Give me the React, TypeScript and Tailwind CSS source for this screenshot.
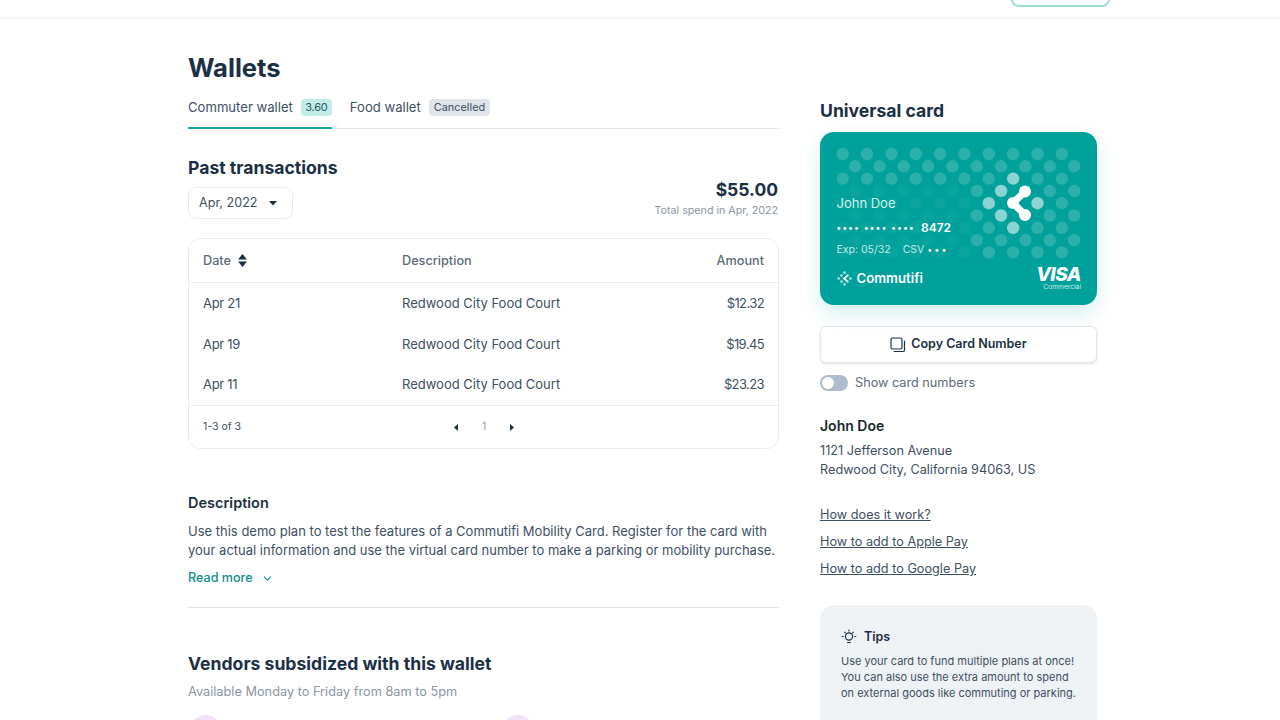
import { ChevronDown } from 'lucide-react'

const rows = [
  { date: 'Apr 21', amount: '$12.32' },
  { date: 'Apr 19', amount: '$19.45' },
  { date: 'Apr 11', amount: '$23.23' },
]

function dotOpacity(r: number, c: number, x: number) {
  // the strong dots around the logo
  const strong = (r === 2 && c === 7) || (r === 4 && (c === 6 || c === 8)) || (r === 6 && c === 7) || ((r === 3 || r === 5) && c === 6)
  if (strong) return 0.55
  if ((r === 3 || r === 5) && c === 7) return 0
  if (r === 4 && c === 7) return 0
  if (r < 3) return 0.17
  if (x > 975) return 0.17
  return 0.035
}

function CardDots() {
  const dots = []
  for (let r = 0; r < 9; r++) {
    for (let c = 0; c < 10; c++) {
      const x = (r % 2 === 0 ? 22.7 : 35) + c * 24.35
      const y = 22 + r * 12.3
      dots.push(<circle key={`${r}-${c}`} cx={x} cy={y} r={6.2} fill="#fff" opacity={dotOpacity(r, c, x + 820)} />)
    }
  }
  return (
    <svg className="absolute inset-0" width="277" height="173" viewBox="0 0 277 173">
      {dots}
      <path d="M205 59.5 L193 71 L205 83" fill="none" stroke="#fff" strokeWidth="7" strokeLinejoin="round" />
      <circle cx="205" cy="59.5" r="6" fill="#fff" />
      <circle cx="193" cy="71" r="6" fill="#fff" />
      <circle cx="205" cy="83" r="6" fill="#fff" />
    </svg>
  )
}

function CommutifiMark() {
  const pts = [[7, 1.5], [4.2, 4.2], [1.5, 7], [4.2, 9.8], [7, 12.5], [9.8, 4.2], [12.5, 7], [9.8, 9.8]]
  return (
    <svg width="15" height="15" viewBox="0 0 14 14">
      {pts.map(([x, y]) => <circle key={`${x}-${y}`} cx={x} cy={y} r="1.2" fill="#fff" opacity="0.7" />)}
      <path d="M9 5 L6.5 7 L9 9" fill="none" stroke="#fff" strokeWidth="1.6" strokeLinecap="round" />
    </svg>
  )
}

function Caret({ dir }: { dir: 'left' | 'right' | 'down' }) {
  if (dir === 'down') return <svg width="8" height="5" viewBox="0 0 8 5"><path d="M0 0h8L4 4.5z" fill="#1b2f45" /></svg>
  return (
    <svg width="4" height="7" viewBox="0 0 4 7">
      <path d={dir === 'left' ? 'M4 0v7L0 3.5z' : 'M0 0v7l4-3.5z'} fill="#1b2f45" />
    </svg>
  )
}

export default function App() {
  return (
    <div className="h-[720px] overflow-hidden bg-white text-[#1b2f45] font-['Inter',sans-serif]">
      <header className="h-[18px] flex justify-end items-end pb-[10px] pr-[170px] border-b border-[#eef0f2]">
        <button className="w-[99px] h-[38px] shrink-0 rounded-lg border-2 border-[#9adcd8] bg-white" />
      </header>

      <main className="flex pl-[188px] gap-[41px]">
        <section className="w-[591px] shrink-0">
          <h1 className="mt-[34px] text-[25.6px] leading-[32px] font-bold">Wallets</h1>

          <div className="mt-[5px] h-[40px] flex border-b border-[#e2e6ea]">
            <div className="h-[40px] flex items-center gap-[8px] pb-[1px] border-b-2 border-[#14a8a4] text-[13.1px] text-[#3d4f63]">
              <span>Commuter wallet</span>
              <span className="h-[17px] w-[31px] text-center rounded bg-[#c3ebe8] text-[11px] leading-[17px] tracking-[-0.2px] text-[#2b5a5f]">3.60</span>
            </div>
            <div className="ml-[18px] h-[40px] flex items-center gap-[8px] pb-[3px] text-[13.1px] text-[#3d4f63]">
              <span>Food wallet</span>
              <span className="h-[17px] px-[5px] rounded bg-[#dfe3ea] text-[10.9px] leading-[17px]">Cancelled</span>
            </div>
          </div>

          <div className="mt-[27px] flex justify-between items-start">
            <div>
              <h2 className="text-[17.6px] leading-[24px] font-bold">Past transactions</h2>
              <button className="mt-[7px] w-[105px] h-[32px] flex items-center gap-[11px] pl-[10px] rounded-lg border border-[#e9ecef] text-[12.6px] text-[#3d4f63] bg-white">
                Apr, 2022
                <Caret dir="down" />
              </button>
            </div>
            <div className="pr-[1px] mt-[22px] text-right">
              <div className="text-[17.5px] leading-[24px] font-bold">$55.00</div>
              <div className="mt-[1px] text-[10.7px] leading-[16px] text-[#8a96a3]">Total spend in Apr, 2022</div>
            </div>
          </div>

          <div className="mt-[19px] rounded-xl border border-[#e9ecef]">
            <div className="h-[44px] flex items-center px-[14px] border-b border-[#e9ecef] text-[12.7px] font-medium text-[#5d6b7a]">
              <div className="w-[199px] flex items-center gap-[7px]">
                Date
                <svg width="9" height="13" viewBox="0 0 9 13"><path d="M0 5.5h9L4.5 0zM0 7.5h9L4.5 13z" fill="#1b2f45" /></svg>
              </div>
              <div className="flex-1">Description</div>
              <div>Amount</div>
            </div>
            {rows.map((row) => (
              <div key={row.date} className="h-[40.7px] flex items-center pt-[1px] px-[14px] text-[13px] text-[#3d4f63]">
                <div className="w-[199px] tracking-[-0.3px]">{row.date}</div>
                <div className="flex-1">Redwood City Food Court</div>
                <div className="tracking-[-0.6px]">{row.amount}</div>
              </div>
            ))}
            <div className="h-[43px] flex items-center px-[14px] border-t border-[#e9ecef] text-[10.5px] text-[#3d4f63]">
              <div className="w-[251px]">1-3 of 3</div>
              <Caret dir="left" />
              <span className="ml-[24px] text-[#8a96a3]">1</span>
              <span className="ml-[24px] flex"><Caret dir="right" /></span>
            </div>
          </div>

          <h3 className="mt-[44px] text-[14.5px] leading-[20px] font-semibold">Description</h3>
          <p className="mt-[9px] text-[13px] leading-[19px] text-[#3d4f63]">
            Use this demo plan to test the features of a Commutifi Mobility Card. Register for the card with<br />
            your actual information and use the virtual card number to make a parking or mobility purchase.
          </p>
          <div className="mt-[8px] flex items-center gap-[8px] text-[12.6px] leading-[20px] font-medium text-[#0f8f8a]">
            Read more
            <ChevronDown size={13} />
          </div>
          <div className="mt-[19px] border-b border-[#dfe3e7]" />

          <h2 className="mt-[44px] text-[17.6px] leading-[24px] font-bold">Vendors subsidized with this wallet</h2>
          <p className="mt-[6px] text-[12.75px] leading-[20px] text-[#8a96a3]">Available Monday to Friday from 8am to 5pm</p>
          <div className="mt-[13px] flex pl-[2px] gap-[280px]">
            <div className="w-[32px] h-[32px] shrink-0 rounded-full bg-[#f3e1f9]" />
            <div className="w-[32px] h-[32px] shrink-0 rounded-full bg-[#f3e1f9]" />
          </div>
        </section>

        <aside className="w-[277px] shrink-0">
          <h2 className="mt-[81px] text-[17.6px] leading-[24px] font-bold">Universal card</h2>

          <div className="relative mt-[9px] h-[173px] rounded-[14px] overflow-hidden bg-[#00a19a] text-white shadow-[0_8px_20px_rgba(0,161,154,0.18)]">
            <CardDots />
            <div className="relative h-full pl-[16.5px] pr-[16px]">
              <div className="pt-[62px] text-[13px] leading-[18px] text-[#d4f0ee]">John Doe</div>
              <div className="mt-[7px] flex items-center gap-[6px] text-[12px] leading-[18px] font-semibold">
                <span className="tracking-[1.4px] text-[9px]">•••• •••• ••••</span>
                <span>8472</span>
              </div>
              <div className="mt-[5px] flex items-center gap-[12px] text-[10.5px] leading-[16px] text-[#c7ebe9]">
                <span>Exp: 05/32</span>
                <span>CSV <span className="text-[9px] text-white tracking-[2px]">•••</span></span>
              </div>
              <div className="mt-[9px] flex items-start justify-between">
                <div className="flex items-center gap-[5px] mt-[2px] text-[13.2px] font-semibold">
                  <CommutifiMark />
                  Commutifi
                </div>
                <div className="text-right">
                  <div className="text-[19px] leading-[16px] font-extrabold italic tracking-[-0.5px]">VISA</div>
                  <div className="text-[6.7px] leading-[8px] text-[#c7ebe9]">Commercial</div>
                </div>
              </div>
            </div>
          </div>

          <button className="mt-[21px] w-full h-[37px] flex items-center justify-center gap-[5px] rounded-md border border-[#e2e6ea] bg-white shadow-sm text-[12.5px] font-semibold">
            <svg width="16" height="16" viewBox="0 0 16 16" fill="none" stroke="#1b2f45" strokeWidth="1.2">
              <rect x="1" y="1" width="11" height="11" rx="1.5" />
              <path d="M14.5 4v9a1.5 1.5 0 0 1-1.5 1.5H4" strokeLinecap="round" />
            </svg>
            Copy Card Number
          </button>

          <div className="mt-[12px] flex items-center gap-[7px] text-[12.7px] leading-[16px] text-[#5d6b7a]">
            <div className="w-[28px] h-[16px] p-[2px] rounded-full bg-[#aebbcb]">
              <div className="w-[12px] h-[12px] rounded-full bg-white" />
            </div>
            Show card numbers
          </div>

          <div className="mt-[25px] text-[14px] leading-[20px] font-semibold text-[#14282b]">John Doe</div>
          <div className="mt-[5px] text-[12.7px] leading-[19px] text-[#3d4f63]">
            1121 Jefferson Avenue<br />
            Redwood City, California 94063, US
          </div>

          <div className="mt-[26px] flex flex-col gap-[7px] text-[12.7px] leading-[20px] text-[#3d4f63] underline">
            <span>How does it work?</span>
            <span>How to add to Apple Pay</span>
            <span>How to add to Google Pay</span>
          </div>

          <div className="mt-[26px] h-[130px] rounded-[14px] bg-[#eff2f5] pl-[21px] pt-[22px]">
            <div className="flex items-center gap-[7px] text-[12.5px] leading-[20px] font-semibold">
              <svg width="16" height="16" viewBox="0 0 16 16" fill="none" stroke="#1b2f45" strokeWidth="1.2" strokeLinecap="round">
                <circle cx="8" cy="7.5" r="3.6" />
                <path d="M6.6 13.5h2.8M8 1v1M2.2 7.5h-1M14.8 7.5h-1M3.7 3.2l.7.7M12.3 3.2l-.7.7" />
              </svg>
              Tips
            </div>
            <p className="mt-[6px] text-[11px] leading-[16px] text-[#3d4f63]">
              Use your card to fund multiple plans at once!<br />
              You can also use the extra amount to spend<br />
              on external goods like commuting or parking.
            </p>
          </div>
        </aside>
      </main>
    </div>
  )
}
